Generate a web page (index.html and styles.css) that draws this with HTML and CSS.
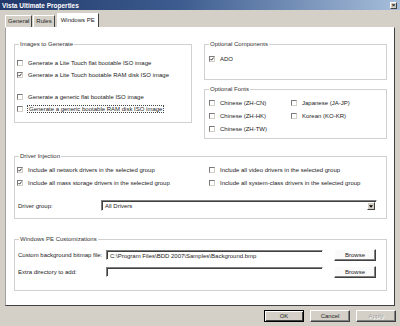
FILE: index.html
```html
<!doctype html>
<html lang="en">
<head>
    <meta charset="UTF-8">
    <title>Vista Ultimate Properties</title>
    <link rel="stylesheet" href="styles.css">
</head>
<body>
<div class="window">
    <div class="titlebar">
        <span class="title">Vista Ultimate Properties</span>
        <span class="close">&times;</span>
    </div>
    <div class="tabs">
        <span class="tab">General</span>
        <span class="tab">Rules</span>
        <span class="tab active">Windows PE</span>
    </div>
    <div class="panel">
        <div class="top-row">
            <fieldset class="group images">
                <legend>Images to Generate</legend>
                <div class="check"><span class="box"></span>Generate a Lite Touch flat bootable ISO image</div>
                <div class="check"><span class="box on"><svg viewBox="0 0 4 4"><path d="M0.4 1.9 L1.6 3.2 L3.6 0.6"/></svg></span>Generate a Lite Touch bootable RAM disk ISO image</div>
                <div class="check spaced"><span class="box"></span>Generate a generic flat bootable ISO image</div>
                <div class="check"><span class="box"></span><span class="focus">Generate a generic bootable RAM disk ISO image</span></div>
            </fieldset>
            <div class="right-col">
                <fieldset class="group components">
                    <legend>Optional Components</legend>
                    <div class="check"><span class="box on"><svg viewBox="0 0 4 4"><path d="M0.4 1.9 L1.6 3.2 L3.6 0.6"/></svg></span>ADO</div>
                </fieldset>
                <fieldset class="group fonts">
                    <legend>Optional Fonts</legend>
                    <div class="font-grid">
                        <div class="check"><span class="box"></span>Chinese (ZH-CN)</div>
                        <div class="check"><span class="box"></span>Japanese (JA-JP)</div>
                        <div class="check"><span class="box"></span>Chinese (ZH-HK)</div>
                        <div class="check"><span class="box"></span>Korean (KO-KR)</div>
                        <div class="check"><span class="box"></span>Chinese (ZH-TW)</div>
                    </div>
                </fieldset>
            </div>
        </div>

        <fieldset class="group drivers">
            <legend>Driver Injection</legend>
            <div class="driver-grid">
                <div class="check"><span class="box on"><svg viewBox="0 0 4 4"><path d="M0.4 1.9 L1.6 3.2 L3.6 0.6"/></svg></span>Include all network drivers in the selected group</div>
                <div class="check"><span class="box"></span>Include all video drivers in the selected group</div>
                <div class="check"><span class="box on"><svg viewBox="0 0 4 4"><path d="M0.4 1.9 L1.6 3.2 L3.6 0.6"/></svg></span>Include all mass storage drivers in the selected group</div>
                <div class="check"><span class="box"></span>Include all system-class drivers in the selected group</div>
            </div>
            <div class="field-row group-row">
                <span class="label">Driver group:</span>
                <div class="select">
                    <span class="value">All Drivers</span>
                    <span class="drop"><svg viewBox="0 0 5 3"><path d="M0 0 H5 L2.5 3 Z"/></svg></span>
                </div>
            </div>
        </fieldset>

        <fieldset class="group custom">
            <legend>Windows PE Customizations</legend>
            <div class="field-row">
                <span class="label wide">Custom background bitmap file:</span>
                <div class="textbox">C:\Program Files\BDD 2007\Samples\Background.bmp</div>
                <span class="btn browse">Browse</span>
            </div>
            <div class="field-row">
                <span class="label wide">Extra directory to add:</span>
                <div class="textbox"></div>
                <span class="btn browse">Browse</span>
            </div>
        </fieldset>
    </div>
    <div class="footer">
        <span class="btn default">OK</span>
        <span class="btn">Cancel</span>
        <span class="btn disabled">Apply</span>
    </div>
</div>
</body>
</html>
```

FILE: styles.css
```css
* {
    box-sizing: border-box;
}
body {
    margin: 0;
    width: 400px;
    height: 326px;
    overflow: hidden;
    background-color: #D4D0C8;
    font-family: "Liberation Sans", Arial, sans-serif;
    font-size: 6px;
    color: #222;
}
.window {
    height: 326px;
    display: flex;
    flex-direction: column;
}
.titlebar {
    height: 10px;
    background: linear-gradient(to right, #22396a, #3d5c8f 45%, #a7bedb);
    display: flex;
    align-items: center;
    justify-content: space-between;
    padding: 0 3px 0 2px;
}
.title {
    color: #FFF;
    font-weight: bold;
    font-size: 6.5px;
}
.close {
    width: 7px;
    height: 7px;
    background-color: #D4D0C8;
    border: 1px solid;
    border-color: #FFF #404040 #404040 #FFF;
    font-size: 6px;
    line-height: 4px;
    text-align: center;
    font-weight: bold;
    color: #000;
}
.tabs {
    height: 17px;
    display: flex;
    align-items: flex-end;
    padding-left: 5px;
}
.tab {
    height: 12px;
    padding: 0 2px;
    margin-right: 1px;
    border: 1px solid;
    border-bottom: none;
    border-color: #FFF #404040 transparent #FFF;
    line-height: 10px;
}
.tab.active {
    height: 14px;
    padding: 0 3px;
    margin-left: 1px;
    background-color: #FFF;
    line-height: 12px;
}
.panel {
    height: 279px;
    margin: 0 5px;
    background-color: #FFF;
    border: 1px solid;
    border-color: #FFF #404040 #404040 #A0A0A0;
    padding: 12px 7px 0 8px;
}
.top-row {
    display: flex;
    align-items: flex-start;
    gap: 12px;
}
.group {
    margin: 0;
    padding: 0 2px;
    border: 1px solid #D0D0D0;
    min-width: 0;
}
.group legend {
    padding: 0 1px;
    margin-left: 2px;
    line-height: 8px;
    color: #333;
}
.images {
    width: 178px;
    height: 83px;
    padding-top: 9px;
}
.right-col {
    flex: 1;
    display: flex;
    flex-direction: column;
    gap: 5px;
}
.right-col .group {
    padding-left: 4px;
}
.right-col .group legend {
    margin-left: 0;
}
.components {
    height: 40px;
    padding-top: 5px;
}
.fonts {
    height: 54px;
    padding-top: 3px;
}
.font-grid {
    display: grid;
    grid-template-columns: 82px 1fr;
}
.font-grid .check {
    height: 13px;
}
.check {
    display: flex;
    align-items: center;
    gap: 5px;
    height: 12px;
    white-space: nowrap;
}
.check.spaced {
    margin-top: 10px;
}
.box {
    width: 6px;
    height: 6px;
    flex: none;
    background-color: #FFF;
    border: 1px solid;
    border-color: #7A7A7A #D4D0C8 #D4D0C8 #7A7A7A;
    display: flex;
}
.box svg {
    width: 4px;
    height: 4px;
    fill: none;
    stroke: #222;
    stroke-width: 0.9;
}
.focus {
    outline: 1px dotted #444;
    padding: 0 1px;
    line-height: 6px;
}
.drivers {
    height: 67px;
    margin-top: 13px;
    padding: 3px 9px 0 2px;
}
.driver-grid {
    display: grid;
    grid-template-columns: 192px 1fr;
}
.driver-grid .check {
    height: 13px;
}
.field-row {
    display: flex;
    align-items: center;
}
.group-row {
    margin-top: 11px;
}
.label {
    width: 84px;
    flex: none;
    padding-left: 1px;
}
.label.wide {
    width: 89px;
}
.select {
    flex: 1;
    height: 11px;
    display: flex;
    align-items: center;
    justify-content: space-between;
    border: 1px solid;
    border-color: #808080 #FFF #FFF #808080;
    box-shadow: inset 1px 1px #404040;
    padding: 1px 1px 0 3px;
}
.drop {
    width: 8px;
    height: 8px;
    background-color: #D4D0C8;
    border: 1px solid;
    border-color: #FFF #404040 #404040 #FFF;
    display: flex;
    align-items: center;
    justify-content: center;
}
.drop svg {
    width: 4px;
    height: 3px;
    fill: #000;
}
.custom {
    height: 56px;
    margin-top: 16px;
    padding: 6px 9px 0 2px;
}
.custom .field-row + .field-row {
    margin-top: 5px;
}
.textbox {
    width: 217px;
    height: 10px;
    border: 1px solid;
    border-color: #808080 #FFF #FFF #808080;
    box-shadow: inset 1px 1px #404040;
    padding: 1px 0 0 3px;
    line-height: 8px;
    white-space: nowrap;
    overflow: hidden;
}
.btn {
    width: 40px;
    height: 12px;
    display: flex;
    align-items: center;
    justify-content: center;
    background-color: #D4D0C8;
    border: 1px solid;
    border-color: #FFF #404040 #404040 #FFF;
    box-shadow: inset -1px -1px #808080;
}
.browse {
    width: 42px;
    margin-left: 11px;
    background-color: #FAFAFA;
}
.footer {
    flex: 1;
    display: flex;
    justify-content: flex-end;
    gap: 6px;
    padding: 4px 4px 0 0;
}
.btn.default {
    border-color: #000;
    box-shadow: inset 1px 1px #FFF, inset -1px -1px #404040;
}
.btn.disabled {
    color: #A0A0A0;
    text-shadow: 1px 1px #FFF;
}
```
